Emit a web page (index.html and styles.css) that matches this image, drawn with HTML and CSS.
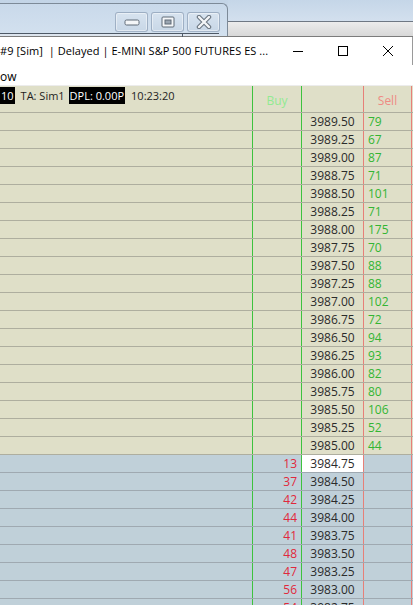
FILE: index.html
```html
<!DOCTYPE html>
<html lang="en">
<head>
<meta charset="utf-8">
<title>Price Ladder</title>
<link rel="stylesheet" href="styles.css">
</head>
<body>
<div class="screen">
  <div class="backdrop">
    <div class="back-win">
      <div class="aero-btns">
        <span class="aero-btn">
          <svg width="16" height="7" viewBox="0 0 16 7"><rect x="1" y="1" width="14" height="5" rx="1.5" fill="#f4f6f8" stroke="#5f6a76"/></svg>
        </span>
        <span class="aero-btn">
          <svg width="14" height="12" viewBox="0 0 14 12"><rect x="1" y="1" width="12" height="10" rx="1" fill="#f4f6f8" stroke="#5f6a76"/><rect x="4" y="4" width="6" height="4" fill="#9aa5b1" stroke="#5f6a76"/></svg>
        </span>
        <span class="aero-btn">
          <svg width="16" height="14" viewBox="0 0 16 14"><path d="M3 2 L13 12 M13 2 L3 12" stroke="#6a7580" stroke-width="4.5" stroke-linecap="round"/><path d="M3 2 L13 12 M13 2 L3 12" stroke="#f4f6f8" stroke-width="2.4" stroke-linecap="round"/></svg>
        </span>
      </div>
      <div class="back-toolbar"><span class="tool-tick"></span></div>
    </div>
    <div class="side-win">
      <div class="side-cap"></div>
      <div class="side-bar"></div>
    </div>
  </div>

  <div class="front-win">
    <div class="titlebar">
      <span class="title">#9 [Sim]&nbsp; | Delayed | E-MINI S&amp;P 500 FUTURES ES ...</span>
      <div class="win-ctrls">
        <span class="win-btn"><svg width="10" height="10" viewBox="0 0 10 10"><path d="M0 5.5 H10" stroke="#000" stroke-width="1"/></svg></span>
        <span class="win-btn"><svg width="10" height="10" viewBox="0 0 10 10"><rect x="0.5" y="0.5" width="9" height="9" fill="none" stroke="#000" stroke-width="1"/></svg></span>
        <span class="win-btn"><svg width="10" height="10" viewBox="0 0 10 10"><path d="M0 0 L10 10 M10 0 L0 10" stroke="#000" stroke-width="1"/></svg></span>
      </div>
    </div>
    <div class="menubar"><span class="menu-item">ow</span></div>

    <div class="ladder">
      <div class="row hdr">
        <div class="cell info">
          <span class="tag">10</span>
          <span class="info-text account">TA: Sim1</span>
          <span class="tag">DPL: 0.00P</span>
          <span class="info-text">10:23:20</span>
        </div>
        <div class="cell buy lbl-buy">Buy</div>
        <div class="cell price"></div>
        <div class="cell sell lbl-sell">Sell</div>
        <div class="cell end"></div>
      </div>

      <div class="row ask"><div class="cell info"></div><div class="cell buy"></div><div class="cell price">3989.50</div><div class="cell sell">79</div><div class="cell end"></div></div>
      <div class="row ask"><div class="cell info"></div><div class="cell buy"></div><div class="cell price">3989.25</div><div class="cell sell">67</div><div class="cell end"></div></div>
      <div class="row ask"><div class="cell info"></div><div class="cell buy"></div><div class="cell price">3989.00</div><div class="cell sell">87</div><div class="cell end"></div></div>
      <div class="row ask"><div class="cell info"></div><div class="cell buy"></div><div class="cell price">3988.75</div><div class="cell sell">71</div><div class="cell end"></div></div>
      <div class="row ask"><div class="cell info"></div><div class="cell buy"></div><div class="cell price">3988.50</div><div class="cell sell">101</div><div class="cell end"></div></div>
      <div class="row ask"><div class="cell info"></div><div class="cell buy"></div><div class="cell price">3988.25</div><div class="cell sell">71</div><div class="cell end"></div></div>
      <div class="row ask"><div class="cell info"></div><div class="cell buy"></div><div class="cell price">3988.00</div><div class="cell sell">175</div><div class="cell end"></div></div>
      <div class="row ask"><div class="cell info"></div><div class="cell buy"></div><div class="cell price">3987.75</div><div class="cell sell">70</div><div class="cell end"></div></div>
      <div class="row ask"><div class="cell info"></div><div class="cell buy"></div><div class="cell price">3987.50</div><div class="cell sell">88</div><div class="cell end"></div></div>
      <div class="row ask"><div class="cell info"></div><div class="cell buy"></div><div class="cell price">3987.25</div><div class="cell sell">88</div><div class="cell end"></div></div>
      <div class="row ask"><div class="cell info"></div><div class="cell buy"></div><div class="cell price">3987.00</div><div class="cell sell">102</div><div class="cell end"></div></div>
      <div class="row ask"><div class="cell info"></div><div class="cell buy"></div><div class="cell price">3986.75</div><div class="cell sell">72</div><div class="cell end"></div></div>
      <div class="row ask"><div class="cell info"></div><div class="cell buy"></div><div class="cell price">3986.50</div><div class="cell sell">94</div><div class="cell end"></div></div>
      <div class="row ask"><div class="cell info"></div><div class="cell buy"></div><div class="cell price">3986.25</div><div class="cell sell">93</div><div class="cell end"></div></div>
      <div class="row ask"><div class="cell info"></div><div class="cell buy"></div><div class="cell price">3986.00</div><div class="cell sell">82</div><div class="cell end"></div></div>
      <div class="row ask"><div class="cell info"></div><div class="cell buy"></div><div class="cell price">3985.75</div><div class="cell sell">80</div><div class="cell end"></div></div>
      <div class="row ask"><div class="cell info"></div><div class="cell buy"></div><div class="cell price">3985.50</div><div class="cell sell">106</div><div class="cell end"></div></div>
      <div class="row ask"><div class="cell info"></div><div class="cell buy"></div><div class="cell price">3985.25</div><div class="cell sell">52</div><div class="cell end"></div></div>
      <div class="row ask"><div class="cell info"></div><div class="cell buy"></div><div class="cell price">3985.00</div><div class="cell sell">44</div><div class="cell end"></div></div>

      <div class="row bid"><div class="cell info"></div><div class="cell buy">13</div><div class="cell price last">3984.75</div><div class="cell sell"></div><div class="cell end"></div></div>
      <div class="row bid"><div class="cell info"></div><div class="cell buy">37</div><div class="cell price">3984.50</div><div class="cell sell"></div><div class="cell end"></div></div>
      <div class="row bid"><div class="cell info"></div><div class="cell buy">42</div><div class="cell price">3984.25</div><div class="cell sell"></div><div class="cell end"></div></div>
      <div class="row bid"><div class="cell info"></div><div class="cell buy">44</div><div class="cell price">3984.00</div><div class="cell sell"></div><div class="cell end"></div></div>
      <div class="row bid"><div class="cell info"></div><div class="cell buy">41</div><div class="cell price">3983.75</div><div class="cell sell"></div><div class="cell end"></div></div>
      <div class="row bid"><div class="cell info"></div><div class="cell buy">48</div><div class="cell price">3983.50</div><div class="cell sell"></div><div class="cell end"></div></div>
      <div class="row bid"><div class="cell info"></div><div class="cell buy">47</div><div class="cell price">3983.25</div><div class="cell sell"></div><div class="cell end"></div></div>
      <div class="row bid"><div class="cell info"></div><div class="cell buy">56</div><div class="cell price">3983.00</div><div class="cell sell"></div><div class="cell end"></div></div>
      <div class="row bid"><div class="cell info"></div><div class="cell buy">54</div><div class="cell price">3982.75</div><div class="cell sell"></div><div class="cell end"></div></div>
    </div>
  </div>
</div>
</body>
</html>
```

FILE: styles.css
```css
* { box-sizing: border-box; }

html, body {
  margin: 0;
  padding: 0;
  background: #ffffff;
}

.screen {
  width: 413px;
  height: 605px;
  overflow: hidden;
  display: flex;
  flex-direction: column;
  font-family: "Open Sans", "Noto Sans", sans-serif;
  font-size: 12px;
  color: #000;
}

/* ---- windows behind ---- */
.backdrop {
  flex: 0 0 36px;
  display: flex;
  background: linear-gradient(#c3d4e6, #cddcec);
}

.back-win {
  width: 228px;
  margin-top: 3px;
  display: flex;
  flex-direction: column;
  border-top: 1px solid #7d8a98;
  border-right: 1px solid #7d8a98;
  border-top-right-radius: 6px;
  background: linear-gradient(#c9d9ea, #d3e1ef);
}

.aero-btns {
  display: flex;
  justify-content: flex-end;
  gap: 3px;
  padding: 8px 7px 0 0;
  height: 29px;
}

.aero-btn {
  width: 33px;
  height: 20px;
  display: flex;
  align-items: center;
  justify-content: center;
  border: 1px solid rgba(120, 140, 165, 0.55);
  border-radius: 3px;
  box-shadow: inset 0 0 0 1px rgba(255, 255, 255, 0.45);
  background: linear-gradient(#d7e3ef, #c8d7e7);
}

.back-toolbar {
  flex: 1;
  position: relative;
  border-top: 1px solid #4e5966;
  margin-right: 8px;
  background: #dde5ee;
}

.tool-tick {
  position: absolute;
  left: 182px;
  top: 0;
  width: 1px;
  height: 3px;
  background: #4e5966;
}

.side-win {
  flex: 1;
  display: flex;
  flex-direction: column;
}

.side-cap {
  flex: 0 0 21px;
  background: linear-gradient(#c5d6e8, #d3e0ee);
}

.side-bar {
  flex: 1;
  border-top: 1px solid #6f7884;
  background: linear-gradient(#ececec, #d8d8d8);
}

/* ---- front window ---- */
.front-win {
  flex: 1;
  display: flex;
  flex-direction: column;
  border-top: 1px solid #7c7c7c;
  background: #fff;
  min-height: 0;
}

.titlebar {
  flex: 0 0 28px;
  display: flex;
  align-items: center;
  padding-right: 2px;
  border-right: 1px solid #9a9a9a;
}

.title {
  flex: 1;
  min-width: 0;
  overflow: hidden;
  white-space: nowrap;
  font-size: 11px;
  letter-spacing: 0.05px;
  padding-bottom: 1px;
}

.win-ctrls {
  flex: 0 0 auto;
  display: flex;
  align-self: stretch;
}

.win-btn {
  width: 45px;
  display: flex;
  align-items: center;
  justify-content: center;
}

.menubar {
  flex: 0 0 21px;
  display: flex;
  align-items: center;
  border-bottom: 1px solid #ececec;
  padding-top: 3px;
}

/* ---- price ladder ---- */
.ladder {
  flex: 1;
  min-height: 0;
  display: flex;
  flex-direction: column;
}

.row {
  flex: 0 0 17.92px;
  display: grid;
  grid-template-columns: 252px 49px 62px 48px 2px;
  border-bottom: 1px solid #aeae9f;
}

.row.hdr {
  flex-basis: 27px;
  background: #dfdfc8;
}

.row.ask {
  background: #dfdfc8;
}

.row.bid {
  background: #c0d0d9;
  border-bottom-color: #9fa9b1;
}

.cell {
  display: flex;
  align-items: center;
  white-space: nowrap;
}

.cell.buy {
  border-left: 1px solid #3ec23e;
  justify-content: flex-end;
  padding-right: 4px;
  color: #e0283c;
}

.cell.price {
  border-left: 1px solid #3ec23e;
  justify-content: center;
  color: #2b2b2b;
}

.cell.price.last {
  background: #ffffff;
}

.cell.sell {
  border-left: 1px solid #e77f78;
  padding-left: 4px;
  color: #33b533;
}

.cell.end {
  border-left: 1px solid #e77f78;
}

.cell.info {
  align-items: flex-start;
  padding-top: 1px;
  gap: 6px;
  font-size: 11px;
  color: #1e1e1e;
}

.tag {
  background: #000;
  color: #fff;
  padding: 0 1px;
  line-height: 17px;
}

.info-text {
  line-height: 17px;
}

.info-text.account {
  width: 42px;
}

.cell.lbl-buy {
  justify-content: center;
  padding: 2px 0 0;
  color: #92ea92;
}

.cell.lbl-sell {
  justify-content: center;
  padding: 2px 0 0;
  color: #ef8a84;
}
```
